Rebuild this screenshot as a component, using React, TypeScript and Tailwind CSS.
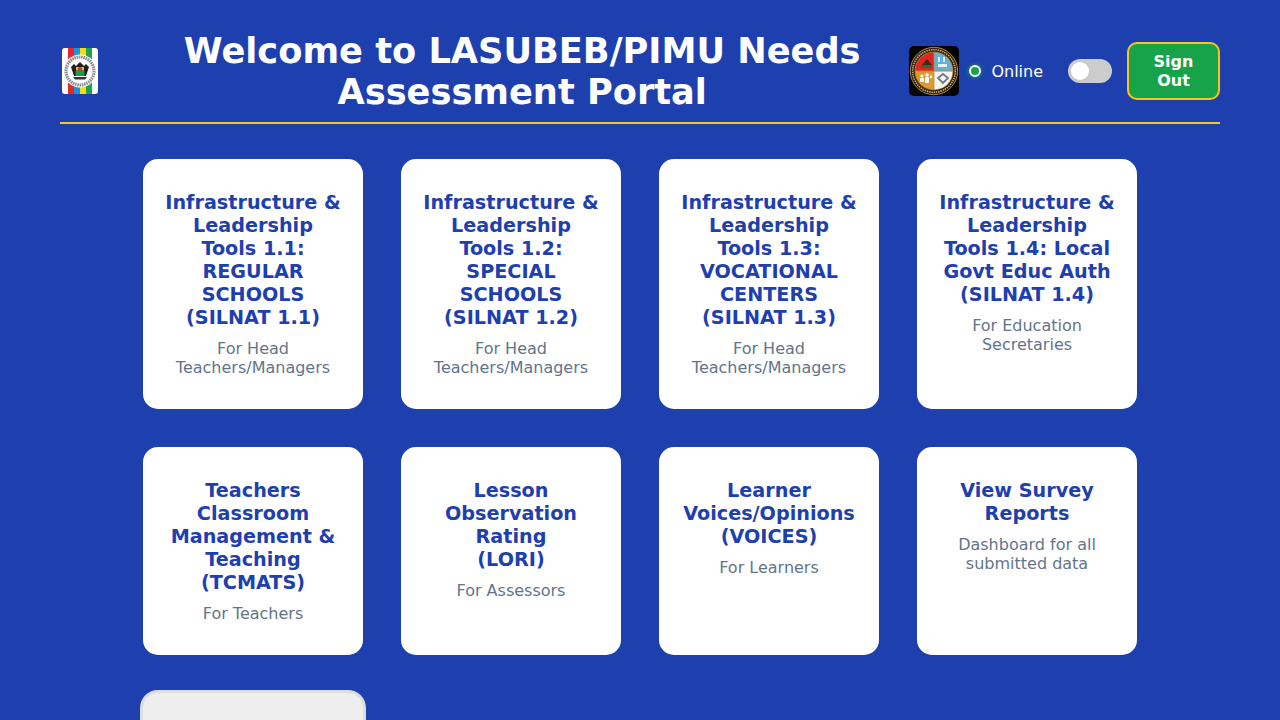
import React from 'react';

const cards = [
  { title: <>Infrastructure &amp; Leadership Tools 1.1: REGULAR SCHOOLS (SILNAT 1.1)</>, desc: 'For Head Teachers/Managers' },
  { title: <>Infrastructure &amp; Leadership Tools 1.2: SPECIAL SCHOOLS (SILNAT 1.2)</>, desc: 'For Head Teachers/Managers' },
  { title: <>Infrastructure &amp; Leadership Tools 1.3: VOCATIONAL CENTERS (SILNAT 1.3)</>, desc: 'For Head Teachers/Managers' },
  { title: <>Infrastructure &amp; Leadership Tools 1.4: Local Govt Educ Auth (SILNAT 1.4)</>, desc: 'For Education Secretaries' },
  { title: <>Teachers Classroom Management &amp; Teaching (TCMATS)</>, desc: 'For Teachers' },
  { title: <>Lesson Observation Rating<br />(LORI)</>, desc: 'For Assessors' },
  { title: <>Learner Voices/Opinions (VOICES)</>, desc: 'For Learners' },
  { title: <>View Survey Reports</>, desc: 'Dashboard for all submitted data' },
];

const StateLogo = () => (
  <svg viewBox="0 0 36 46" className="w-[36px] h-[46px] rounded-[3px]">
    <rect width="36" height="46" fill="#fff" />
    <rect x="6" width="6" height="46" fill="#e8262a" />
    <rect x="12" width="6" height="46" fill="#1f8fe0" />
    <rect x="18" width="6" height="46" fill="#f7dc12" />
    <rect x="24" width="6" height="46" fill="#1ea34a" />
    <circle cx="18" cy="23" r="16.5" fill="#fff" />
    <circle cx="18" cy="23" r="14" fill="none" stroke="#8f8f8f" strokeWidth="3.2" strokeDasharray="1.6 0.7" />
    <circle cx="18" cy="23" r="11.5" fill="#fff" />
    <path d="M9 19l3-3 2 2 4-4 4 4 2-2 3 3-3 9H12z" fill="#1f1f1f" />
    <path d="M14 19h8v5h-8z" fill="#e8b820" />
    <path d="M13.5 23c2-2 7-2 9 0v5h-9z" fill="#1f9a45" />
    <circle cx="18" cy="21" r="2" fill="#d92b2b" />
    <path d="M11 29h14l-2 2.5H13z" fill="#333" />
  </svg>
);

const Seal = () => (
  <svg viewBox="0 0 50 50" className="w-[50px] h-[50px] rounded-[5px] bg-black">
    <circle cx="25" cy="25" r="23.7" fill="#33220e" stroke="#b5843a" strokeWidth="1" />
    <circle cx="25" cy="25" r="21.3" fill="none" stroke="#c8b48a" strokeWidth="1.5" strokeDasharray="1.4 0.9" />
    <circle cx="25" cy="25" r="19.3" fill="#b5843a" />
    <path d="M24.6 24.6V6.5a18.2 18.2 0 0 0-18.1 18.1z" fill="#e2231f" />
    <path d="M25.4 24.6V6.5a18.2 18.2 0 0 1 18.1 18.1z" fill="#62b1dd" />
    <path d="M24.6 25.4H6.5a18.2 18.2 0 0 0 18.1 18.1z" fill="#dd9a2e" />
    <path d="M25.4 25.4h18.1a18.2 18.2 0 0 1-18.1 18.1z" fill="#f6f6f4" />
    <path d="M13 19l5-6 5 6z" fill="#3a2a1a" />
    <rect x="12" y="19" width="11" height="3" fill="#2f6b2a" />
    <rect x="29" y="11" width="2" height="5" fill="#e8f4fb" />
    <rect x="34" y="11" width="2" height="5" fill="#e8f4fb" />
    <rect x="29" y="18" width="9" height="3" fill="#e8f4fb" />
    <circle cx="13" cy="30" r="1.6" fill="#fff" />
    <circle cx="18" cy="29" r="1.8" fill="#fff" />
    <circle cx="22" cy="31" r="1.4" fill="#fff" />
    <rect x="11" y="32" width="4" height="4" rx="1" fill="#fff" />
    <rect x="16" y="31" width="4" height="6" rx="1" fill="#fff" />
    <path d="M34 28l5 4-5 5-5-5z" fill="none" stroke="#6b7a88" strokeWidth="1.8" />
  </svg>
);

const App = () => {
  return (
    <div className="h-screen overflow-hidden bg-[#1e40af] px-[60px] pt-[30px] font-['DejaVu_Sans',sans-serif]">
      <header className="flex items-center h-[94px] border-b-2 border-[#fcc419] pb-[10px]">
        <div className="w-10 flex justify-center">
          <StateLogo />
        </div>
        <h1 className="flex-1 ml-[35px] text-center text-[35.2px] leading-[41px] font-bold text-white">
          Welcome to LASUBEB/PIMU Needs<br />Assessment Portal
        </h1>
        <div className="flex items-center">
          <Seal />
          <span className="ml-[10px] w-3 h-3 rounded-full bg-[#16a34a] border-2 border-white shadow-[0_0_5px_#16a34a]" />
          <span className="ml-[10px] text-base leading-[19px] text-white">Online</span>
          <div className="ml-[25px] w-11 h-6 rounded-full bg-[#cccccc] p-[3px]">
            <div className="w-[18px] h-[18px] rounded-full bg-white" />
          </div>
          <button className="ml-[15px] w-[93px] h-[58px] rounded-[10px] bg-[#16a34a] border-2 border-[#fcc419] text-white font-bold text-base leading-[19px]">
            Sign<br />Out
          </button>
        </div>
      </header>

      <main className="grid grid-cols-[repeat(4,220px)] justify-center gap-[38px] pt-[35px]">
        {cards.map((card, i) => (
          <div key={i} className="bg-white rounded-[15px] px-5 py-8 text-center">
            <h2 className="text-[19.2px] leading-[23px] font-bold text-[#1e40af]">{card.title}</h2>
            <p className="mt-[10px] text-base leading-[19px] text-[#64748b]">{card.desc}</p>
          </div>
        ))}
        <div className="h-[200px] bg-[#eeeeee] rounded-[15px] ring-[3px] ring-[#dddddd]" />
      </main>
    </div>
  );
};

export default App;
